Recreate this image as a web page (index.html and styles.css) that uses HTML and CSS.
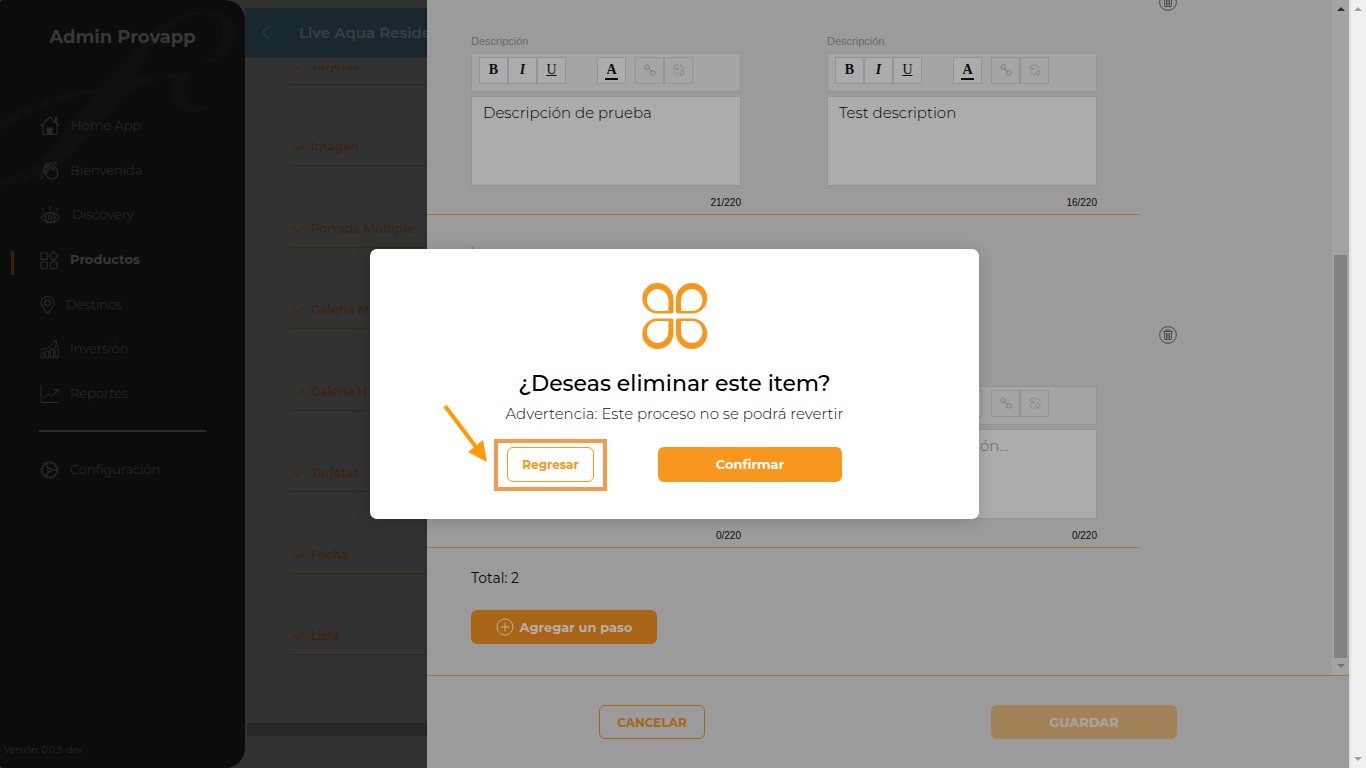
FILE: index.html
```html
<!DOCTYPE html>
<html lang="es">
<head>
<meta charset="utf-8">
<title>Admin Provapp</title>
<link rel="stylesheet" href="styles.css">
</head>
<body>
<svg class="defs" aria-hidden="true">
  <symbol id="chev" viewBox="0 0 12 7"><path d="M0 .5 6 6 12 .5"/></symbol>
  <symbol id="link" viewBox="0 0 12 12"><circle cx="3.200" cy="3.200" r="2.300"/><circle cx="8.800" cy="8.800" r="2.300"/><path d="M4 4l4 4"/></symbol>
  <symbol id="unlink" viewBox="0 0 12 12"><path d="M5.500 2C4 .2 1 1.200 1.200 3.500 1.500 5 3 5.700 4.500 5.200M7 10.500c1.500 1.300 4.200 0 3.800-2.300C10.500 7 9 6.300 7.500 6.800M4 4l1.500 1.500M6.500 8.500 8 9.500"/><path stroke-width=".7" d="M7.500 .5v2M10 1.500 9 3M11.500 4h-2M.5 8h2M2 11l1-1.500M5 11.500v-2"/></symbol>
  <symbol id="trash" viewBox="0 0 18 18"><circle cx="9" cy="9" r="8.400"/><path d="M4 5.500h10M7 5V4h4v1M5.300 6l.5 7.500h6.400l.5-7.500M7.500 7v5.500M9 7v5.500M10.500 7v5.500"/></symbol>
</svg>
<div class="window">
  <div class="app">
    <nav class="sidebar" aria-label="Principal">
      <svg class="mark" viewBox="0 0 245 200" aria-hidden="true"><path d="M0 121C25 104 60 92 100 88L121 67C146 33 172 13 202 11c30-1 40 18 30 34-7 12-17 18-31 19 18-10 25-30 18-42-10-14-36-8-54 12-18 18-26 34-30 42 22-5 45-3 63-4-9 3-14 8-13 18 1 14 12 20 25 16-12 12-34 6-38-9-2-9 1-15 3-18-16 0-31 3-46 14C92 128 65 183 0 186v-8c28-2 44-19 61-44l35-41C56 101 25 113 0 133z"/></svg>
      <h1 class="brand">Admin Provapp</h1>
      <ul class="menu">
        <li><a href="#"><svg width="20" height="20" viewBox="0 0 20 20"><path d="M.5 10 10 1l9 9M3 8.500V18.500h14V8.500M15.500 6V1.500h1.500V7.500"/><path class="solid" d="M7.500 12h4.500v6.500H7.500z"/></svg>Home App</a></li>
        <li><a href="#"><svg width="19" height="20" viewBox="0 0 19 20"><path d="M3 10l5 6c3 4 9 2 9.500-3 .2-3-1-6-2.500-7-1-.5-1.500.5-1 2l.5 2L8 3c-1-1-2.300 0-1.500 1.200L10 9M6.500 4.500c-1-1-2.400.2-1.500 1.300L8.500 10M5 7C4 6 2.700 7 3.500 8.300L7.500 12M10 4.500C9 2 11 1.500 12 3l2 3M1 14l2 3M1 17l1 1M14 1l3 2.500"/></svg>Bienvenida</a></li>
        <li><a href="#"><svg width="21" height="20" viewBox="0 0 21 20"><path d="M1 12.500c5-7 14-7 18.500 0-4.500 7-13.500 7-18.500 0zM2 3l2 3M10 1v4M18 3l-2 3"/><circle cx="10.200" cy="12.500" r="4.800"/><circle cx="10.200" cy="12.500" r="1.800"/></svg>Discovery</a></li>
        <li class="active"><a href="#"><svg width="19" height="20" viewBox="0 0 19 20"><rect x="1" y="3" width="6.500" height="6.500" rx="1"/><rect x="1" y="12" width="6.500" height="6.500" rx="1"/><rect x="10.500" y="12" width="6.500" height="6.500" rx="1"/><path d="M13.500 1.500 18 6l-4.500 4.500L9 6z"/></svg>Productos</a></li>
        <li><a href="#"><svg width="15" height="20" viewBox="0 0 15 20"><path d="M7.500 18.500C4 14.500 1 11 1 8a6.500 6.500 0 0 1 13 0c0 3-3 6.500-6.500 10.500z"/><circle cx="7.500" cy="8" r="2.800"/></svg>Destinos</a></li>
        <li><a href="#"><svg class="thin" width="19" height="20" viewBox="0 0 19 20"><path d="M1 19v-5h3v5zM5.700 19v-7h3v7zM10.400 19v-9h3v9zM15 19V6.500h3V19zM1 10c6 0 11-3 15-8M13 2h3.500v3"/></svg>Inversión</a></li>
        <li><a href="#"><svg class="thin" width="19" height="20" viewBox="0 0 19 20"><path d="M1 1v17.500h17.500M3.500 15l5-5 3 2.500 6.500-7M13 5.500h5v4"/></svg>Reportes</a></li>
      </ul>
      <ul class="menu config">
        <li><a href="#"><svg width="19" height="20" viewBox="0 0 19 20"><circle cx="9.500" cy="10" r="7.300"/><circle class="teeth" cx="9.500" cy="10" r="8.500"/><circle cx="9.500" cy="10" r="1.800"/><path d="M11.500 10H17M8.500 8.500 6 3.500M8.500 11.500 6 16.500"/></svg>Configuración</a></li>
      </ul>
      <p class="version">Versión: 0.0.9-dev</p>
    </nav>

    <main class="page">
      <header class="page-head">
        <button class="back" aria-label="Volver"><svg width="9" height="13" viewBox="0 0 9 13"><path d="M7.500.5 1 6.500l6.500 6"/></svg></button>
        <h2>Live Aqua Residences</h2>
      </header>
      <div class="blocks">
        <div class="block-list">
          <button><svg><use href="#chev"/></svg>Tarjetas</button>
          <button><svg><use href="#chev"/></svg>Imagen</button>
          <button><svg><use href="#chev"/></svg>Portada Múltiple</button>
          <button><svg><use href="#chev"/></svg>Galería Múltiple</button>
          <button><svg><use href="#chev"/></svg>Galería H</button>
          <button><svg><use href="#chev"/></svg>Tarjetas</button>
          <button><svg><use href="#chev"/></svg>Fecha</button>
          <button><svg><use href="#chev"/></svg>Lista</button>
        </div>
      </div>
      <div class="hbar"></div>
    </main>

    <aside class="drawer">
      <div class="drawer-body">
        <div class="scroll">
          <section class="step">
            <div class="fields">
              <div class="field">
                <label class="label" for="d1">Descripción</label>
                <div class="tools">
                  <div class="group"><button class="b">B</button><button class="i">I</button><button class="u">U</button></div>
                  <div class="group color"><button><span>A</span></button></div>
                  <div class="group"><button disabled aria-label="Enlazar"><svg><use href="#link"/></svg></button><button disabled aria-label="Quitar enlace"><svg><use href="#unlink"/></svg></button></div>
                </div>
                <textarea id="d1">Descripción de prueba</textarea>
                <span class="count">21/220</span>
              </div>
              <div class="field">
                <label class="label" for="d2">Descripción</label>
                <div class="tools">
                  <div class="group"><button class="b">B</button><button class="i">I</button><button class="u">U</button></div>
                  <div class="group color"><button><span>A</span></button></div>
                  <div class="group"><button disabled aria-label="Enlazar"><svg><use href="#link"/></svg></button><button disabled aria-label="Quitar enlace"><svg><use href="#unlink"/></svg></button></div>
                </div>
                <textarea id="d2">Test description</textarea>
                <span class="count">16/220</span>
              </div>
            </div>
            <button class="trash" aria-label="Eliminar"><svg><use href="#trash"/></svg></button>
          </section>
          <section class="step">
            <div class="fields">
              <div class="field">
                <span class="label top">Imagen</span>
                <label class="label" for="d3">Descripción</label>
                <div class="tools">
                  <div class="group"><button class="b">B</button><button class="i">I</button><button class="u">U</button></div>
                  <div class="group color"><button><span>A</span></button></div>
                  <div class="group"><button disabled aria-label="Enlazar"><svg><use href="#link"/></svg></button><button disabled aria-label="Quitar enlace"><svg><use href="#unlink"/></svg></button></div>
                </div>
                <textarea id="d3" placeholder="Escribe la descripción..."></textarea>
                <span class="count">0/220</span>
              </div>
              <div class="field">
                <label class="label" for="d4">Descripción</label>
                <div class="tools">
                  <div class="group"><button class="b">B</button><button class="i">I</button><button class="u">U</button></div>
                  <div class="group color"><button><span>A</span></button></div>
                  <div class="group"><button disabled aria-label="Enlazar"><svg><use href="#link"/></svg></button><button disabled aria-label="Quitar enlace"><svg><use href="#unlink"/></svg></button></div>
                </div>
                <textarea id="d4" placeholder="Escribe la descripción..."></textarea>
                <span class="count">0/220</span>
              </div>
            </div>
            <button class="trash" aria-label="Eliminar"><svg><use href="#trash"/></svg></button>
          </section>
          <div class="summary">
            <p>Total: 2</p>
            <button class="add"><svg width="18" height="18" viewBox="0 0 18 18"><circle cx="9" cy="9" r="8"/><path d="M9 4.500v9M4.500 9h9"/></svg>Agregar un paso</button>
          </div>
        </div>
        <div class="bar inner"><i class="up"></i><i class="thumb"></i><i class="down"></i></div>
      </div>
      <footer class="drawer-foot">
        <button class="cancel">CANCELAR</button>
        <button class="save">GUARDAR</button>
      </footer>
    </aside>

    <div class="overlay">
      <div class="modal" role="dialog" aria-labelledby="ask">
        <svg class="logo" width="66" height="66" viewBox="0 0 66 66"><path fill-rule="evenodd" d="M15.500 0C24.500 0 31.500 7 31.500 16V28.500Q31.500 30.500 29.500 30.500H15.500A15.250 15.250 0 0 1 15.500 0zM16 6A11 11 0 0 0 5 17C5 23.500 9.500 28 15.500 28H26.500V17A11 11 0 0 0 16 6z"/><path fill-rule="evenodd" d="M50 0C41 0 34 7 34 16V28.500Q34 30.500 36 30.500H50A15.250 15.250 0 0 0 50 0zM49.500 6A11 11 0 0 1 60.500 17C60.500 23.500 56 28 50 28H39V17A11 11 0 0 1 49.500 6z"/><path fill-rule="evenodd" d="M15.500 66C24.500 66 31.500 59 31.500 50V37.500Q31.500 35.500 29.500 35.500H15.500A15.250 15.250 0 0 0 15.500 66zM16 60A11 11 0 0 1 5 49C5 42.500 9.500 38 15.500 38H26.500V49A11 11 0 0 1 16 60z"/><path fill-rule="evenodd" d="M50 66C41 66 34 59 34 50V37.500Q34 35.500 36 35.500H50A15.250 15.250 0 0 1 50 66zM49.500 60A11 11 0 0 0 60.500 49C60.500 42.500 56 38 50 38H39V49A11 11 0 0 0 49.500 60z"/></svg>
        <h2 id="ask">¿Deseas eliminar este item?</h2>
        <p>Advertencia: Este proceso no se podrá revertir</p>
        <div class="actions">
          <div class="spot">
            <button class="return">Regresar</button>
            <svg class="arrow" width="46" height="60" viewBox="0 0 46 60" aria-hidden="true"><path class="shaft" d="M2 2 33 43"/><path class="head" d="M44 58 25 48 40 36z"/></svg>
          </div>
          <button class="confirm">Confirmar</button>
        </div>
      </div>
    </div>
  </div>
  <div class="bar outer"><i class="up"></i><i class="down"></i></div>
</div>
</body>
</html>
```
FILE: styles.css
```css
* { box-sizing: border-box; margin: 0; padding: 0; }
body { font-family: Montserrat, Inter, sans-serif; font-size: 13px; }
button { font: inherit; background: none; border: 0; }
svg { fill: none; stroke: currentColor; flex: none; }
ul { list-style: none; }
a { color: inherit; text-decoration: none; }
.defs { position: absolute; width: 0; height: 0; }

.window { display: flex; height: 100vh; overflow: hidden; }
.app { position: relative; flex: 1; display: flex; min-width: 0; background: #323232; }

/* Scroll bars */
.bar { width: 17px; flex: none; display: flex; flex-direction: column; align-items: center; padding: 7px 0; }
.bar i { display: block; }
.bar .up, .bar .down { border: 4px solid transparent; }
.outer { background: #f0f0f0; justify-content: space-between; color: #a0a0a0; }
.bar .up { border-top: 0; border-bottom-color: currentColor; }
.bar .down { border-bottom: 0; border-top-color: currentColor; }
.inner { background: #a3a3a3; color: #707070; }
.inner .up { color: #303030; }
.inner .thumb { width: 13px; height: 61%; margin-top: auto; margin-bottom: 6px; background: #828282; }

/* Sidebar */
.sidebar { position: relative; width: 245px; flex: none; display: flex; flex-direction: column; background: #0c0c0c; border-radius: 4px 20px 20px 4px; color: #2b2b2b; overflow: hidden; }
.mark { position: absolute; top: 0; left: 0; width: 100%; fill: #0f0f0f; stroke: none; }
.brand { position: relative; padding-top: 25px; margin-bottom: 54px; text-align: center; font-size: 18px; line-height: 24px; font-weight: 700; color: #383838; }
.menu { position: relative; display: grid; grid-auto-rows: 1fr; height: 312px; margin-left: 11px; }
.menu li { display: flex; border-left: 3px solid transparent; padding-left: 26px; }
.menu a { display: flex; align-items: center; gap: 11px; font-size: 13px; font-weight: 300; color: #303030; }
.menu svg { stroke-width: 1.2; margin-top: 2px; color: #2b2b2b; }
.menu .thin { stroke-width: 1; }
.menu .solid { fill: currentColor; }
.menu .teeth { stroke-dasharray: 1.500 1.500; stroke-width: 1.500; }
.menu .active { border-image: linear-gradient(transparent 32%, #3b2305 32% 84%, transparent 84%) 1; border-width: 0 0 0 3px; border-style: solid; }
.menu .active a { font-weight: 700; color: #383838; }
.menu.config { height: 44px; padding: 0; margin-top: 32px; }
.menu.config::before { content: ""; position: absolute; top: -17px; left: 28px; right: 39px; height: 2px; background: #2b2b2b; }
.version { margin-top: auto; padding: 0 0 11px 4px; font-size: 9px; line-height: 14px; font-weight: 400; }

/* Page behind the drawer */
.page { flex: 1; min-width: 0; display: flex; flex-direction: column; padding-top: 8px; padding-bottom: 32px; }
.page-head { display: flex; align-items: center; height: 49px; flex: none; padding: 0 0 1px 16px; gap: 29px; background: #19272e; color: #3a4042; }
.back { display: flex; color: inherit; }
.page-head h2 { font-size: 15px; font-weight: 600; }
.blocks { flex: 1; min-height: 0; margin-top: 8px; padding: 0 0 68px 44px; overflow: hidden; display: flex; flex-direction: column; justify-content: flex-end; }
.block-list { display: grid; grid-auto-rows: 1fr; height: 652px; flex: none; }
.block-list button { display: flex; align-items: flex-end; gap: 7px; padding: 0 0 10px 3px; border-bottom: 1px solid #3a2409; color: #3a2412; font-size: 12px; line-height: 16px; font-weight: 600; text-align: left; }
.block-list svg { width: 12px; height: 7px; margin-bottom: 4px; overflow: visible; stroke-width: 1.500; color: #40280c; }
.hbar { height: 13px; flex: none; margin-left: 2px; background: #272727; }

/* Drawer */
.drawer { position: absolute; inset: 0 0 0 427px; display: flex; flex-direction: column; background: #9b9b9b; box-shadow: 0 0 4px rgba(0, 0, 0, .2); }
.drawer-body { flex: 1; min-height: 0; display: flex; }
.scroll { flex: 1; min-width: 0; overflow: hidden; display: flex; flex-direction: column; justify-content: flex-end; }
.step { flex: none; display: flex; align-items: flex-start; padding-right: 155px; }
.fields { flex: 1; height: 333px; display: flex; align-items: flex-end; gap: 86px; padding: 0 43px 4px 44px; border-bottom: 1px solid #a97824; }
.field { flex: 1; min-width: 0; display: flex; flex-direction: column; }
.label { font: 11px/14px "Liberation Sans", sans-serif; color: #686868; }
.label.top { margin-bottom: 109px; }
.tools { display: flex; align-items: flex-start; height: 39px; margin: 5px 0 4px; padding: 3px 7px; background: #a5a5a5; border: 1px solid #949494; }
.group { display: flex; }
.color { margin: 0 9px 0 31px; }
.tools button { width: 29px; height: 27px; display: flex; align-items: center; justify-content: center; background: #acacac; border: 1px solid #949494; padding-bottom: 2px; font: 700 14px/16px "Liberation Serif", serif; color: #0c0c0c; }
.tools button:disabled { background: #a5a5a5; color: #7d7d7d; }
.tools .i { font-style: italic; }
.tools .u { font-weight: 400; text-decoration: underline; }
.color span { padding: 3px 1px 0; border-bottom: 2px solid #0c0c0c; }
.tools svg { width: 12px; height: 12px; }
textarea { width: 100%; height: 90px; padding: 6px 11px; resize: none; background: #acacac; border: 1px solid #949494; font: 300 15px/20px Montserrat, Inter, sans-serif; color: #000; }
textarea::placeholder { color: #63676b; }
.count { align-self: flex-end; margin-top: 10px; font: 10px/14px "Liberation Sans", sans-serif; color: #0c0c0c; }
.trash { display: flex; margin: 111px 0 0 19px; color: #484848; }
.trash svg { width: 18px; height: 18px; }
.summary { flex: none; padding: 20px 44px 31px; }
.summary p { font: 400 14px/20px Montserrat, Inter, sans-serif; color: #0c0c0c; margin-bottom: 22px; }
.add { display: flex; align-items: center; justify-content: center; gap: 6px; width: 186px; height: 34px; padding-bottom: 1px; border-radius: 6px; background: #a96515; color: #b4b0aa; font-size: 13px; font-weight: 700; }
.drawer-foot { height: 93px; flex: none; display: flex; align-items: center; justify-content: space-around; padding: 0 29px; border-top: 1px solid #a97824; }
.drawer-foot button { height: 34px; border-radius: 6px; font-size: 13px; font-weight: 700; }
.drawer-foot .cancel { width: 106px; border: 1px solid #a96515; color: #a96515; font-size: 12px; }
.save { width: 186px; background: #a28259; color: #aaa69e; }

/* Confirmation dialog */
.overlay { position: absolute; inset: 0; display: flex; align-items: center; justify-content: center; }
.modal { width: 609px; display: flex; flex-direction: column; align-items: center; padding: 34px 24px 37px; border-radius: 7px; background: #fff; box-shadow: 0 2px 16px rgba(0, 0, 0, .15); }
.logo { fill: #f8971d; stroke: none; }
.modal h2 { margin-top: 21px; font-size: 22px; line-height: 28px; font-weight: 500; color: #000; }
.modal p { margin: 6px 0 23px; font-size: 15px; line-height: 20px; font-weight: 300; color: #111; }
.actions { display: flex; gap: 64px; }
.actions button { height: 35px; border-radius: 6px; padding-bottom: 1px; font-size: 13px; font-weight: 700; }
.spot { position: relative; }
.spot::after { content: ""; position: absolute; inset: -8px -13px -9px; border: 4px solid #f49a4a; pointer-events: none; }
.actions .return { width: 87px; border: 1px solid #f8971d; color: #f8971d; font-size: 12px; }
.confirm { width: 184px; background: #f8971d; color: #fff; }
.arrow { position: absolute; left: -64px; top: -43px; color: #ff9a0a; }
.arrow .shaft { stroke-width: 4; }
.arrow .head { fill: currentColor; stroke: none; }
```
